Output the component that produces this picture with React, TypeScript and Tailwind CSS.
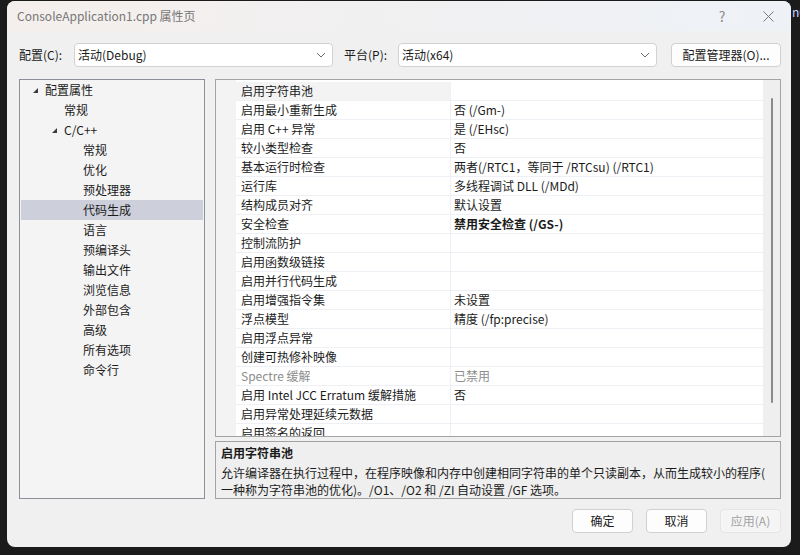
import { Fragment } from "react";

type PropRow = {
    name: string;
    value?: string;
    selected?: boolean;
    bold?: boolean;
    disabled?: boolean;
}

const treeItems = [
    { text: "配置属性", level: 0, open: true },
    { text: "常规", level: 1 },
    { text: "C/C++", level: 1, open: true },
    { text: "常规", level: 2 },
    { text: "优化", level: 2 },
    { text: "预处理器", level: 2 },
    { text: "代码生成", level: 2, selected: true },
    { text: "语言", level: 2 },
    { text: "预编译头", level: 2 },
    { text: "输出文件", level: 2 },
    { text: "浏览信息", level: 2 },
    { text: "外部包含", level: 2 },
    { text: "高级", level: 2 },
    { text: "所有选项", level: 2 },
    { text: "命令行", level: 2 },
];

const rows: PropRow[] = [
    { name: "启用字符串池", selected: true },
    { name: "启用最小重新生成", value: "否 (/Gm-)" },
    { name: "启用 C++ 异常", value: "是 (/EHsc)" },
    { name: "较小类型检查", value: "否" },
    { name: "基本运行时检查", value: "两者(/RTC1，等同于 /RTCsu) (/RTC1)" },
    { name: "运行库", value: "多线程调试 DLL (/MDd)" },
    { name: "结构成员对齐", value: "默认设置" },
    { name: "安全检查", value: "禁用安全检查 (/GS-)", bold: true },
    { name: "控制流防护" },
    { name: "启用函数级链接" },
    { name: "启用并行代码生成" },
    { name: "启用增强指令集", value: "未设置" },
    { name: "浮点模型", value: "精度 (/fp:precise)" },
    { name: "启用浮点异常" },
    { name: "创建可热修补映像" },
    { name: "Spectre 缓解", value: "已禁用", disabled: true },
    { name: "启用 Intel JCC Erratum 缓解措施", value: "否" },
    { name: "启用异常处理延续元数据" },
    { name: "启用签名的返回" },
];

const Expander = () => (
    <svg width="7" height="7" viewBox="0 0 7 7" className="shrink-0">
        <polygon points="6,1 6,6 1,6" fill="#3c3c3c" />
    </svg>
);

const Chevron = () => (
    <svg width="10" height="6" viewBox="0 0 10 6">
        <polyline points="1,1 5,5 9,1" fill="none" stroke="#6a6a6a" strokeWidth="1" />
    </svg>
);

const Combo = ({ text }: { text: string }) => (
    <div className="w-[259px] h-[24px] shrink-0 bg-white border border-[#d2d2d2] rounded-[4px] flex items-center justify-between pl-[3px] pr-[6px]">
        <span className="text-[12px] text-[#1b1b1b]">{text}</span>
        <Chevron />
    </div>
);

const App = () => {
    return (
        <div className="w-[800px] h-[555px] bg-[#1b1b1b] flex font-['Noto_Sans_CJK_SC',sans-serif] overflow-hidden">
            <div className="w-[7px] shrink-0"></div>
            <div className="mt-[1px] w-[784px] h-[546px] shrink-0 rounded-[8px] bg-[#f0f0f0] flex flex-col overflow-hidden">
                {/* TITLE BAR */}
                <div className="h-[30px] shrink-0 flex items-center justify-between bg-gradient-to-r from-[#f4efec] to-[#eef2f7] pl-[10px]">
                    <span className="text-[12px] text-[#777777]">ConsoleApplication1.cpp 属性页</span>
                    <div className="flex items-center">
                        <span className="w-[46px] text-center text-[14px] text-[#8a8a8a]">?</span>
                        <div className="w-[46px] flex justify-center">
                            <svg width="11" height="11" viewBox="0 0 11 11">
                                <path d="M0.5 0.5 L10.5 10.5 M10.5 0.5 L0.5 10.5" stroke="#7a7a7a" strokeWidth="1" />
                            </svg>
                        </div>
                    </div>
                </div>

                <div className="flex flex-col pl-[12px] pr-[10px] flex-1">
                    {/* CONFIG ROW */}
                    <div className="flex items-center mt-[12px] h-[24px]">
                        <span className="w-[55px] shrink-0 whitespace-nowrap text-[12px] text-[#1b1b1b]">配置(C):</span>
                        <Combo text="活动(Debug)" />
                        <span className="w-[65px] shrink-0 whitespace-nowrap pl-[11px] text-[12px] text-[#1b1b1b]">平台(P):</span>
                        <Combo text="活动(x64)" />
                        <div className="ml-auto w-[110px] h-[24px] bg-[#fdfdfd] border border-[#d0d0d0] rounded-[4px] flex items-center justify-center whitespace-nowrap text-[12px] text-[#1b1b1b]">配置管理器(O)...</div>
                    </div>

                    {/* MAIN */}
                    <div className="flex mt-[12px] gap-[10px]">
                        <div className="w-[186px] h-[420px] border border-[#8c9099] bg-[#f4f4f4] p-[1px] pt-0">
                            {treeItems.map((item, index) => (
                                <div key={index} className={`h-[20px] flex items-center text-[12px] text-[#1b1b1b] ${item.selected ? "bg-[#cdcfdb]" : ""}`}>
                                    <div className={`flex items-center ${item.level === 0 ? "pl-[11px]" : item.level === 1 ? "pl-[30px]" : "pl-[62px]"}`}>
                                        {item.open && <Expander />}
                                        <span className={item.open ? "pl-[6px]" : item.level === 1 ? "pl-[13px]" : ""}>{item.text}</span>
                                    </div>
                                </div>
                            ))}
                        </div>

                        <div className="flex flex-col w-[566px] h-[420px] gap-[4px]">
                            <div className="h-[358px] border border-[#a3a3a3] bg-white flex overflow-hidden">
                                <div className="w-[20px] bg-[#f3f3f4] shrink-0"></div>
                                <div className="flex-1 pt-[2px]">
                                    {rows.map((row, index) => (
                                        <Fragment key={index}>
                                            <div className={`h-[19px] flex text-[12px] border-b border-[#eff0f5] ${row.disabled ? "text-[#8d8d8d]" : "text-[#1b1b1b]"}`}>
                                                <div className={`w-[215px] shrink-0 pl-[5px] flex items-center whitespace-nowrap border-r border-[#eff0f5] ${row.selected ? "bg-[#f3f3f4]" : ""}`}>{row.name}</div>
                                                <div className={`flex-1 pl-[3px] flex items-center whitespace-nowrap ${row.bold ? "font-bold" : ""}`}>{row.value}</div>
                                            </div>
                                        </Fragment>
                                    ))}
                                </div>
                                <div className="w-[17px] shrink-0 bg-[#efefef] flex justify-center pt-[18px]">
                                    <div className="w-[2px] h-[305px] bg-[#8a8a8a] rounded-full ml-[1px]"></div>
                                </div>
                            </div>
                            <div className="flex-1 border border-[#a3a3a3] bg-[#efefef] pl-[5px] pt-[2px] text-[12px] text-[#1b1b1b]">
                                <div className="h-[18px] flex items-center font-bold">启用字符串池</div>
                                <div className="leading-[17px] whitespace-nowrap mt-[2px]">
                                    允许编译器在执行过程中，在程序映像和内存中创建相同字符串的单个只读副本，从而生成较小的程序(<br />
                                    一种称为字符串池的优化)。/O1、/O2 和 /ZI 自动设置 /GF 选项。
                                </div>
                            </div>
                        </div>
                    </div>

                    {/* BUTTONS */}
                    <div className="flex justify-end gap-[13px] mt-[10px]">
                        <button className="w-[61px] h-[24px] bg-[#fdfdfd] border border-[#d0d0d0] rounded-[4px] text-[12px] text-[#1b1b1b]">确定</button>
                        <button className="w-[61px] h-[24px] bg-[#fdfdfd] border border-[#d0d0d0] rounded-[4px] text-[12px] text-[#1b1b1b]">取消</button>
                        <button className="w-[61px] h-[24px] bg-[#f5f5f5] border border-[#e5e5e5] rounded-[4px] text-[12px] text-[#a2a2a2]">应用(A)</button>
                    </div>
                </div>
            </div>
            <div className="pt-[6px] pl-[1px] text-[12px] text-[#c8d6ff] leading-none whitespace-nowrap">n0</div>
        </div>
    );
}

export default App;
